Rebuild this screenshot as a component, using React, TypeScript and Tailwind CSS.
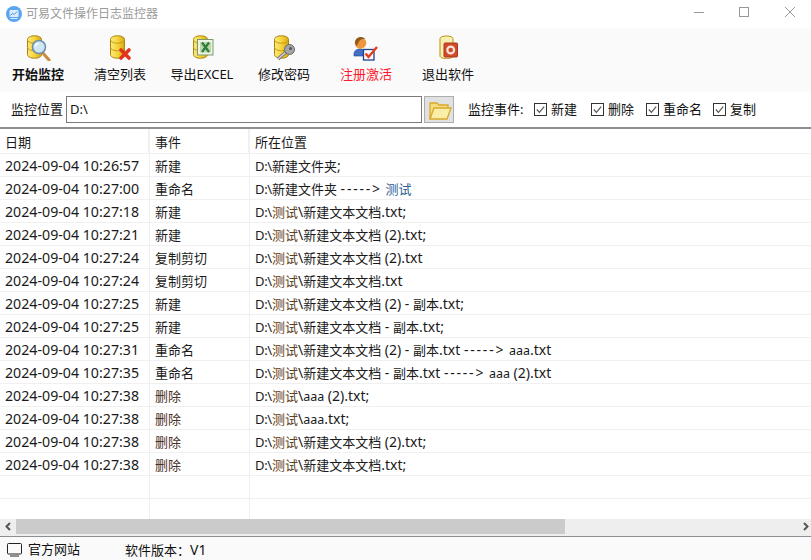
import React from "react";

const font = { fontFamily: '"Noto Sans", "Noto Sans CJK SC", sans-serif' };

function Cyl({ x = 1 }: { x?: number }) {
  return (
    <g transform={`translate(${x} 0)`}>
      <path d="M2.5 4.5C2.5 2 6 .8 9.5 .8s7 1.2 7 3.7v15c0 2.5-3.5 3.7-7 3.7s-7-1.2-7-3.7z" fill="url(#dbg)" stroke="#a8820f" />
      <path d="M2.5 4.5c0 2.5 3.5 3.700 7 3.700s7-1.200 7-3.700" fill="none" stroke="#c29a15" />
      <path d="M2.5 12c0 2.5 3.5 3.700 7 3.700s7-1.200 7-3.700" fill="none" stroke="#c29a15" />
    </g>
  );
}

function Defs() {
  return (
    <defs>
      <linearGradient id="dbg" x1="0" x2="1" y1="0" y2="0">
        <stop offset="0" stopColor="#fbe97f" />
        <stop offset="0.5" stopColor="#f6d53a" />
        <stop offset="1" stopColor="#d8a615" />
      </linearGradient>
    </defs>
  );
}

function IconStart() {
  return (
    <svg width="26" height="26" viewBox="0 0 26 26">
      <Defs />
      <Cyl x={0} />
      <path d="M17 17l7 8" stroke="#c98a3c" strokeWidth="3" strokeLinecap="round" />
      <circle cx="14" cy="12" r="6.500" fill="#cfe6f7" stroke="#6f8fa8" strokeWidth="1.600" />
      <path d="M10.500 11.500a3.500 3.500 0 0 1 3-3" stroke="#fff" strokeWidth="1.400" fill="none" />
    </svg>
  );
}

function IconClear() {
  return (
    <svg width="26" height="26" viewBox="0 0 26 26">
      <Defs />
      <Cyl />
      <path d="M14 15l8 8M22 15l-8 8" stroke="#e2331c" strokeWidth="3.600" strokeLinecap="round" />
    </svg>
  );
}

function IconExcel() {
  return (
    <svg width="26" height="26" viewBox="0 0 26 26">
      <Defs />
      <Cyl x={2} />
      <rect x="8.500" y="4.500" width="15.500" height="15.500" fill="#eef3e6" stroke="#7d9a6e" />
      <rect x="11" y="7" width="11" height="10.500" fill="#bcd7ac" />
      <path d="M13 7.500l7 9.500M20 7.500l-7 9.500" stroke="#2f7d3a" strokeWidth="2.200" />
    </svg>
  );
}

function IconKey() {
  return (
    <svg width="26" height="26" viewBox="0 0 26 26">
      <Defs />
      <Cyl x={1} />
      <path d="M7 24l9-8" stroke="#7f7f7f" strokeWidth="3.400" />
      <path d="M7 24l9-8" stroke="#d5d5d5" strokeWidth="1.200" />
      <circle cx="18.500" cy="14.500" r="5" fill="#a5a5a5" stroke="#666" />
      <circle cx="19.500" cy="13.500" r="1.500" fill="#555" />
    </svg>
  );
}

function IconUser() {
  return (
    <svg width="26" height="26" viewBox="0 0 26 26">
      <path d="M1 19c0-3 2.500-5 6-5s6 2 6 5v2H1z" fill="#3f6fc6" stroke="#24448c" strokeWidth=".6" />
      <circle cx="7.500" cy="8" r="5.800" fill="#f0963a" />
      <path d="M2 8c0-4 3-6 6-6 2 0 3.500 1 4 2-3 0-5 .5-6 2.500L4.500 9.500 3.500 11z" fill="#8f5a22" />
      <rect x="10.500" y="14.500" width="10.500" height="10.500" fill="#fff" stroke="#1f3f8f" strokeWidth="1.300" />
      <path d="M12.500 18.500l3 3.500 8.500-10" fill="none" stroke="#e8391c" strokeWidth="2.400" />
    </svg>
  );
}

function IconExit() {
  return (
    <svg width="26" height="26" viewBox="0 0 26 26">
      <path d="M5 3.500C5 2 8 1 11.500 1S18 2 18 3.500V21c0 1.500-3 2.500-6.500 2.500S5 22.500 5 21z" fill="#f8efb4" stroke="#b8930f" />
      <rect x="9" y="8" width="13.500" height="14" rx="1" fill="#d24a2a" stroke="#a8341c" />
      <circle cx="15.700" cy="15" r="3.400" fill="none" stroke="#f7e3dc" strokeWidth="2.200" />
    </svg>
  );
}

function Tool({ icon, label, className = "" }: { icon: React.ReactNode; label: string; className?: string }) {
  return (
    <div className="flex flex-col items-center shrink-0 w-[76px]">
      <div className="h-[26px] w-[26px] mt-[7px]">{icon}</div>
      <div className={`mt-[3px] text-[13px] leading-[20px] whitespace-nowrap ${className}`}>{label}</div>
    </div>
  );
}

function Check({ label, w }: { label: string; w: string }) {
  return (
    <div className={`flex items-center shrink-0 ${w}`}>
      <svg width="13" height="13" viewBox="0 0 13 13" className="shrink-0">
        <rect x=".5" y=".5" width="12" height="12" fill="#fff" stroke="#333" />
        <path d="M2.800 6.500l2.600 2.800 4.800-5.600" fill="none" stroke="#555" strokeWidth="1.200" />
      </svg>
      <span className="ml-[4px] text-[13px] leading-none whitespace-nowrap">{label}</span>
    </div>
  );
}

const rows: [string, string, string][] = [
  ["2024-09-04 10:26:57", "新建", "D:\\新建文件夹;"],
  ["2024-09-04 10:27:00", "重命名", "D:\\新建文件夹 -----> 测试"],
  ["2024-09-04 10:27:18", "新建", "D:\\测试\\新建文本文档.txt;"],
  ["2024-09-04 10:27:21", "新建", "D:\\测试\\新建文本文档 (2).txt;"],
  ["2024-09-04 10:27:24", "复制剪切", "D:\\测试\\新建文本文档 (2).txt"],
  ["2024-09-04 10:27:24", "复制剪切", "D:\\测试\\新建文本文档.txt"],
  ["2024-09-04 10:27:25", "新建", "D:\\测试\\新建文本文档 (2) - 副本.txt;"],
  ["2024-09-04 10:27:25", "新建", "D:\\测试\\新建文本文档 - 副本.txt;"],
  ["2024-09-04 10:27:31", "重命名", "D:\\测试\\新建文本文档 (2) - 副本.txt -----> aaa.txt"],
  ["2024-09-04 10:27:35", "重命名", "D:\\测试\\新建文本文档 - 副本.txt -----> aaa (2).txt"],
  ["2024-09-04 10:27:38", "删除", "D:\\测试\\aaa (2).txt;"],
  ["2024-09-04 10:27:38", "删除", "D:\\测试\\aaa.txt;"],
  ["2024-09-04 10:27:38", "删除", "D:\\测试\\新建文本文档 (2).txt;"],
  ["2024-09-04 10:27:38", "删除", "D:\\测试\\新建文本文档.txt;"],
  ["", "", ""],
  ["", "", ""],
];

function PathText({ text }: { text: string }) {
  const parts = text.split(/(D:\\|----->|测试|aaa|[\u4e00-\u9fff]+)/).filter(Boolean);
  return (
    <>
      {parts.map((p, i) => {
        if (p === "D:\\") return <span key={i} className="text-[13px] tracking-[-0.3px]">{p}</span>;
        if (p === "----->") return <span key={i} className="text-[14px] tracking-[1.800px]">{p}</span>;
        if (p === "aaa") return <span key={i} className="text-[12.500px]">{p}</span>;
        if (p === "测试") {
          const moved = i === parts.length - 1 && text.includes("----->");
          return <span key={i} className={`text-[13px] ${moved ? "text-[#2f5f95]" : "text-[#5f4020]"}`}>{p}</span>;
        }
        if (/[\u4e00-\u9fff]/.test(p)) return <span key={i} className="text-[13px]">{p}</span>;
        return <span key={i} className="text-[14px]">{p}</span>;
      })}
    </>
  );
}

function Row({ r, last }: { r: [string, string, string]; last?: boolean }) {
  return (
    <div className={`flex text-[13px] leading-[22px] text-[#1a1a1a] ${last ? "h-[20px]" : "h-[23px] border-b border-[#f0f0f0]"}`}>
      <div className="w-[150px] shrink-0 pl-[5px] pt-[1px] border-r border-[#f0f0f0] whitespace-nowrap text-[14.2px]">{r[0]}</div>
      <div className={`w-[100px] shrink-0 pl-[5px] pt-[1px] border-r border-[#f0f0f0] whitespace-nowrap ${r[1] === "删除" ? "text-[#4a3028]" : ""}`}>{r[1]}</div>
      <div className="flex-1 pl-[5px] pt-[1px] whitespace-nowrap">
        <PathText text={r[2]} />
      </div>
    </div>
  );
}

export default function App() {
  return (
    <div className="w-[811px] h-[560px] bg-white flex flex-col overflow-hidden text-[#111]" style={font}>
      <div className="h-[28px] flex items-center shrink-0">
        <svg width="16" height="16" viewBox="0 0 16 16" className="ml-[6px]">
          <circle cx="8" cy="8" r="8" fill="#5aa5f2" />
          <rect x="3.500" y="4" width="9" height="7" rx="1" fill="#dcecfc" />
          <path d="M4.500 9.500l2-2.200 1.700 1.200 3-3" stroke="#4a8fe0" fill="none" />
          <path d="M4.500 12.500h7" stroke="#dcecfc" />
        </svg>
        <span className="ml-[4px] text-[12px] text-[#9a9a9a]">可易文件操作日志监控器</span>
        <div className="ml-auto -mr-[2px] flex items-center">
          <svg width="46" height="28" viewBox="0 0 46 28"><path d="M19 12.500h10" stroke="#999" /></svg>
          <svg width="46" height="28" viewBox="0 0 46 28"><rect x="18.500" y="7.500" width="9" height="9" fill="none" stroke="#999" /></svg>
          <svg width="46" height="28" viewBox="0 0 46 28"><path d="M18 7l10 10M28 7L18 17" stroke="#999" /></svg>
        </div>
      </div>

      <div className="h-[64px] shrink-0 bg-[#fafafa] flex gap-[6px]">
        <Tool icon={<IconStart />} label="开始监控" className="font-bold" />
        <Tool icon={<IconClear />} label="清空列表" />
        <Tool icon={<IconExcel />} label="导出EXCEL" />
        <Tool icon={<IconKey />} label="修改密码" />
        <Tool icon={<IconUser />} label="注册激活" className="text-[#ff1a2e]" />
        <Tool icon={<IconExit />} label="退出软件" />
      </div>

      <div className="h-[37px] shrink-0 flex items-start pt-[4px] pl-[11px] border-b-2 border-[#8a8f94]">
        <span className="text-[13px] leading-[27px] w-[55px] shrink-0 whitespace-nowrap">监控位置</span>
        <div className="w-[356px] h-[27px] shrink-0 border border-[#7a7a7a] bg-white pl-[3px] text-[13px] leading-[25px]">D:\</div>
        <div className="ml-[2px] w-[30px] h-[27px] shrink-0 bg-[#e1e1e1] border border-[#adadad] flex items-center justify-center">
          <svg width="25" height="22" viewBox="0 0 25 22">
            <path d="M3 20V4h7l2 2h9v3" fill="#f5dc80" stroke="#d9a92a" strokeWidth="1.300" />
            <path d="M3 20l4-11h17l-4 11z" fill="#fbeea8" stroke="#d9a92a" strokeWidth="1.300" />
          </svg>
        </div>
        <span className="ml-[14px] text-[13px] leading-[27px] w-[66px] shrink-0 whitespace-nowrap">监控事件:</span>
        <div className="h-[27px] flex">
          <Check label="新建" w="w-[57px]" />
          <Check label="删除" w="w-[55px]" />
          <Check label="重命名" w="w-[67px]" />
          <Check label="复制" w="w-[50px]" />
        </div>
      </div>

      <div className="flex-1 min-h-0 flex flex-col">
        <div className="h-[25px] shrink-0 flex text-[13px] leading-[26px] text-[#1a1a1a] border-b border-[#f0f0f0]">
          <div className="w-[150px] shrink-0 pl-[5px] border-r-2 border-[#f0f0f0]">日期</div>
          <div className="w-[100px] shrink-0 pl-[5px] border-r-2 border-[#f0f0f0]">事件</div>
          <div className="flex-1 pl-[5px]">所在位置</div>
        </div>
        <div className="flex-1 min-h-0 overflow-hidden">
          {rows.map((r, i) => (
            <Row key={i} r={r} last={i === rows.length - 1} />
          ))}
        </div>
        <div className="h-[17px] shrink-0 bg-[#eeeeee] flex items-stretch">
          <div className="w-[16px] flex items-center justify-center mb-[2px]">
            <svg width="8" height="9" viewBox="0 0 8 9"><path d="M6 1L2.500 4.500 6 8" fill="none" stroke="#555" strokeWidth="2" /></svg>
          </div>
          <div className="w-[549px] bg-[#cbcbcb] mb-[2px]" />
          <div className="flex-1 flex items-center justify-end pr-[1px] mb-[2px]">
            <svg width="8" height="9" viewBox="0 0 8 9"><path d="M2 1l3.500 3.500L2 8" fill="none" stroke="#555" strokeWidth="2" /></svg>
          </div>
        </div>
      </div>

      <div className="h-[24px] shrink-0 bg-[#fafafa] border-t border-[#8a8f94] flex items-center pt-[2px] text-[13px]">
        <svg width="15" height="14" viewBox="0 0 15 14" className="ml-[7px]">
          <rect x=".5" y=".5" width="14" height="10.500" rx="1" fill="none" stroke="#222" />
          <path d="M3 13h9" stroke="#222" />
        </svg>
        <span className="ml-[6px] w-[97px]">官方网站</span>
        <span>{"软件版本\uFF1A"}<span className="text-[14px]">V1</span></span>
      </div>
    </div>
  );
}
